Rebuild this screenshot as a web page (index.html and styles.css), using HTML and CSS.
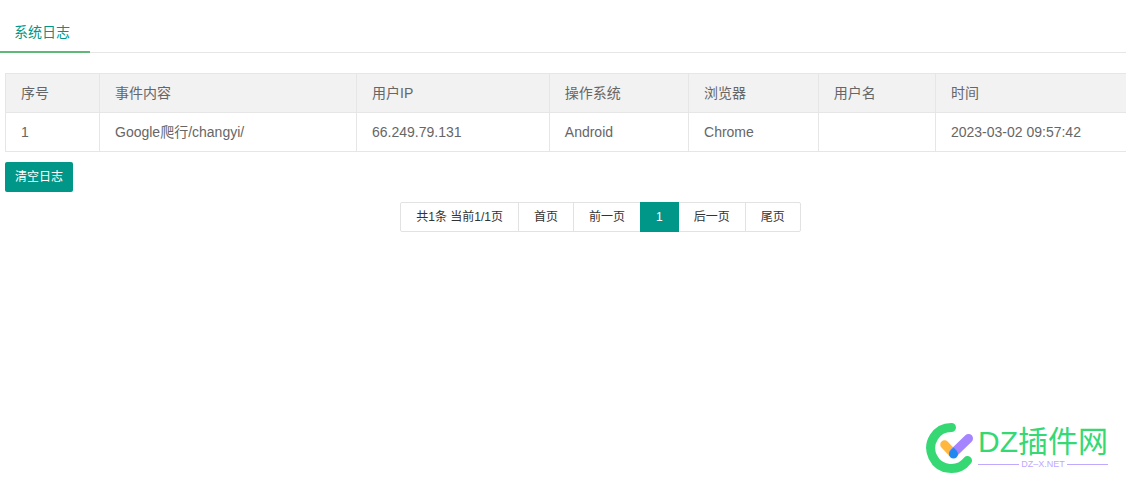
FILE: index.html
```html
<!DOCTYPE html>
<html lang="zh-CN">
<head>
<meta charset="utf-8">
<title>系统日志</title>
<link rel="stylesheet" href="styles.css">
</head>
<body>
<nav class="tabs"><a class="tab" href="#log" aria-current="page">系统日志</a></nav>
<main class="content" id="log">
  <table class="log-table">
    <colgroup>
      <col class="col-id"><col class="col-event"><col class="col-ip"><col class="col-os"><col class="col-browser"><col class="col-user"><col>
    </colgroup>
    <thead>
      <tr><th>序号</th><th>事件内容</th><th>用户IP</th><th>操作系统</th><th>浏览器</th><th>用户名</th><th>时间</th></tr>
    </thead>
    <tbody>
      <tr><td>1</td><td>Google爬行/changyi/</td><td>66.249.79.131</td><td>Android</td><td>Chrome</td><td></td><td>2023-03-02 09:57:42</td></tr>
    </tbody>
  </table>
  <button class="clear-button" type="button">清空日志</button>
  <nav class="pager" aria-label="分页">
    <span class="page">共1条 当前1/1页</span>
    <a class="page" href="#first">首页</a>
    <a class="page" href="#prev">前一页</a>
    <span class="page page-current" aria-current="page">1</span>
    <a class="page" href="#next">后一页</a>
    <a class="page" href="#last">尾页</a>
  </nav>
</main>
<footer class="brand">
  <svg class="brand-mark" width="50" height="52" viewBox="0 0 50 52" fill="none" stroke-linecap="round" aria-hidden="true">
    <path d="M25.500 5.500A20.500 20.500 0 1 0 41.500 38.500" stroke="#36d874" stroke-width="9"/>
    <path d="M18.500 22.500L27 31.500" stroke="#ffb83d" stroke-width="8.500"/>
    <path d="M27.500 31L42.500 16.500" stroke="#a584ff" stroke-width="9"/>
    <path d="M27.500 25.500C25.500 27.500 23 29.500 23 32A4.500 4.500 0 0 0 32 32C32 29.500 29.500 27.500 27.500 25.500Z" fill="#2088ee"/>
  </svg>
  <div class="brand-text">
    <span class="brand-name">DZ插件网</span>
    <span class="brand-domain">DZ–X.NET</span>
  </div>
</footer>
</body>
</html>
```
FILE: styles.css
```css
* {
  box-sizing: border-box;
}

body {
  display: flex;
  flex-direction: column;
  min-height: 100vh;
  margin: 0;
  overflow: hidden;
  background: #fff;
  color: #666;
  font: 14px/20px "Liberation Sans", "Noto Sans CJK SC", sans-serif;
}

a {
  color: inherit;
  text-decoration: none;
}

.tabs {
  display: flex;
  margin-top: 12px;
  border-bottom: 1px solid #e6e6e6;
}

.tab {
  margin-bottom: -1px;
  padding: 1px 20px 0 14px;
  border-bottom: 2px solid #5fb878;
  color: #009688;
  line-height: 38px;
}

/* The log area is wider than the window and runs off its right side. */
.content {
  margin: 20px -70px 0 5px;
}

.log-table {
  width: 100%;
  table-layout: fixed;
  border-collapse: collapse;
}

.log-table th,
.log-table td {
  padding: 9px 15px;
  border: 1px solid #e6e6e6;
  font-weight: 400;
  text-align: left;
}

.log-table th {
  background: #f2f2f2;
}

.col-id { width: 7.9%; }
.col-event { width: 21.6%; }
.col-ip { width: 16.2%; }
.col-os { width: 11.7%; }
.col-browser { width: 10.9%; }
.col-user { width: 9.85%; }

.clear-button {
  display: block;
  margin-top: 10px;
  padding: 0 10px;
  border: 0;
  border-radius: 2px;
  background: #009688;
  color: #fff;
  font: inherit;
  font-size: 12px;
  line-height: 30px;
}

.pager {
  display: flex;
  justify-content: center;
  margin-top: 10px;
  color: #333;
  font-size: 12px;
  line-height: 28px;
}

.page {
  margin-right: -1px;
  padding: 0 15px;
  border: 1px solid #e2e2e2;
}

.page:first-child {
  border-radius: 2px 0 0 2px;
}

.page:last-child {
  margin-right: 0;
  border-radius: 0 2px 2px 0;
}

.page-current {
  z-index: 1;
  border-color: #009688;
  background: #009688;
  color: #fff;
}

.brand {
  display: flex;
  gap: 2px;
  margin: auto 18px 14px auto;
}

.brand-text {
  display: flex;
  flex-direction: column;
}

.brand-name {
  color: #36d874;
  font-size: 30px;
  line-height: 40px;
}

.brand-domain {
  display: flex;
  align-items: center;
  gap: 2px;
  margin-top: -3px;
  color: #c0a8ff;
  font-size: 9px;
  line-height: 10px;
}

.brand-domain::before,
.brand-domain::after {
  flex: 1;
  height: 1px;
  background: #c0a8ff;
  content: "";
}
```
